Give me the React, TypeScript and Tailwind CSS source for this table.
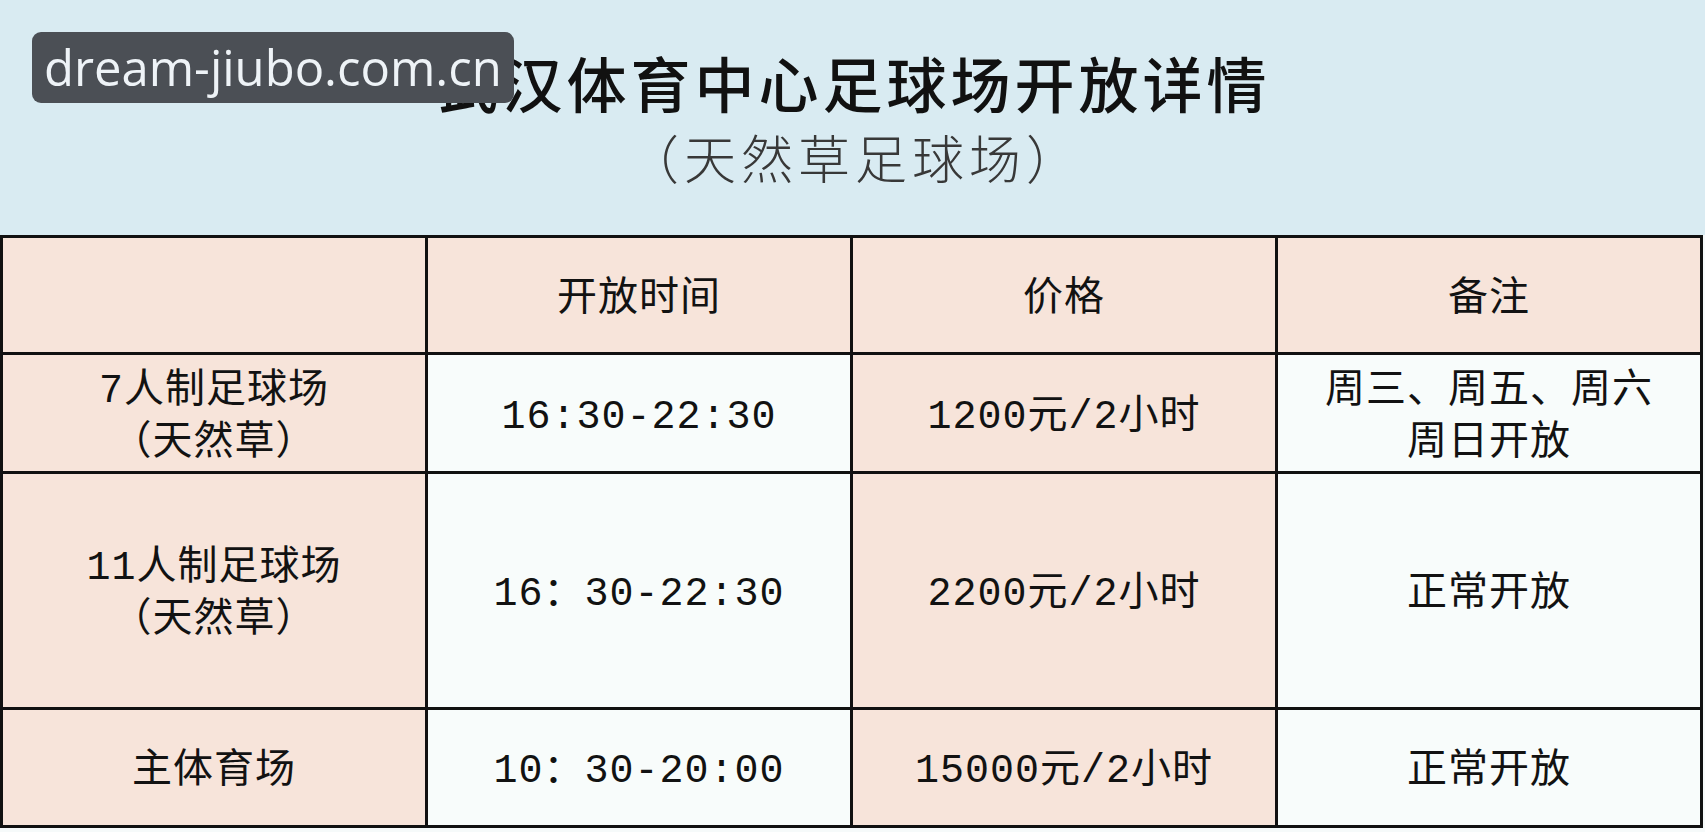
const cellFont = "font-['Liberation_Mono','Noto_Sans_CJK_SC',monospace]"

type Cell = { lines: string[]; peach: boolean }

const rows: { h: string; cells: Cell[] }[] = [
  {
    h: 'h-[114px]',
    cells: [
      { lines: [''], peach: true },
      { lines: ['开放时间'], peach: true },
      { lines: ['价格'], peach: true },
      { lines: ['备注'], peach: true }
    ]
  },
  {
    h: 'h-[116px]',
    cells: [
      { lines: ['7人制足球场', '（天然草）'], peach: true },
      { lines: ['16:30-22:30'], peach: false },
      { lines: ['1200元/2小时'], peach: true },
      { lines: ['周三、周五、周六', '周日开放'], peach: false }
    ]
  },
  {
    h: 'h-[233px]',
    cells: [
      { lines: ['11人制足球场', '（天然草）'], peach: true },
      { lines: ['16：30-22:30'], peach: false },
      { lines: ['2200元/2小时'], peach: true },
      { lines: ['正常开放'], peach: false }
    ]
  },
  {
    h: 'h-[115px]',
    cells: [
      { lines: ['主体育场'], peach: true },
      { lines: ['10：30-20:00'], peach: false },
      { lines: ['15000元/2小时'], peach: true },
      { lines: ['正常开放'], peach: false }
    ]
  }
]

function TableCell({ cell, h }: { cell: Cell; h: string }) {
  return (
    <div
      className={
        'flex flex-col items-center justify-center pt-[9px] text-[40px] leading-[52px] tracking-[1px] text-[#121212] ' +
        cellFont +
        ' ' +
        h +
        (cell.peach ? ' bg-[#f7e4da]' : ' bg-[#f8fcfb]')
      }
    >
      {cell.lines.map((line, i) => (
        <span key={i} className="whitespace-nowrap">
          {line}
        </span>
      ))}
    </div>
  )
}

export default function App() {
  return (
    <div className="relative w-[1705px] h-[832px] overflow-hidden bg-[#f6fafa]">
      {/* Heading band */}
      <div className="h-[235px] bg-[#d9ebf2] flex flex-col items-center">
        <h1 className="pt-[52px] pl-[4px] text-[60px] leading-[60px] tracking-[4px] text-[#111] font-medium font-['Noto_Sans_CJK_SC',sans-serif]">
          武汉体育中心足球场开放详情
        </h1>
        <p className="mt-[18px] pl-[5px] text-[52px] leading-[54px] tracking-[5px] text-[#383838] font-light font-['Noto_Sans_CJK_SC',sans-serif]">
          （天然草足球场）
        </p>
      </div>

      {/* Table */}
      <div className="w-[1703px] border-[3px] border-[#111] bg-[#111] grid grid-cols-4 gap-[3px]">
        {rows.map((row, r) =>
          row.cells.map((cell, c) => <TableCell key={`${r}-${c}`} cell={cell} h={row.h} />)
        )}
      </div>

      {/* Watermark */}
      <div className="absolute left-[32px] top-[32px] w-[482px] h-[71px] rounded-[9px] bg-[#4b4f55] pl-[12px] pt-[2px] text-[49px] leading-[66px] text-[#eef3f7] font-['Open_Sans',sans-serif] whitespace-nowrap">
        dream-jiubo.com.cn
      </div>
    </div>
  )
}
